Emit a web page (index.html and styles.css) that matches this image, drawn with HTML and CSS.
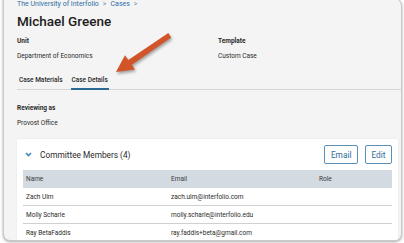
FILE: index.html
```html
<!DOCTYPE html>
<html lang="en">
<head>
  <link rel="stylesheet" href="styles.css">
</head>
<body>

<div class="window">
  <div class="crumbs">
    <a href="#">The University of Interfolio</a><span class="sep">&gt;</span><a href="#">Cases</a><span class="sep">&gt;</span>
  </div>
  <h1 class="title">Michael Greene</h1>

  <div class="meta">
    <div class="meta-col">
      <div class="label">Unit</div>
      <div class="value">Department of Economics</div>
    </div>
    <div class="meta-col">
      <div class="label">Template</div>
      <div class="value">Custom Case</div>
    </div>
  </div>

  <div class="tabs">
    <a class="tab" href="#">Case Materials</a>
    <a class="tab active" href="#">Case Details</a>
  </div>

  <div class="label reviewing">Reviewing as</div>
  <div class="value">Provost Office</div>

  <div class="card">
    <div class="card-head">
      <svg class="chevron" width="7" height="5" viewBox="0 0 7 5"><path d="M1 1 L3.5 3.5 L6 1" fill="none" stroke="#3a86bf" stroke-width="1.6"/></svg>
      <span class="card-title">Committee Members (4)</span>
      <a class="btn" href="#">Email</a>
      <a class="btn" href="#">Edit</a>
    </div>
    <div class="table">
      <div class="row head">
        <span>Name</span><span>Email</span><span>Role</span>
      </div>
      <div class="row">
        <span>Zach Ulm</span><span>zach.ulm@interfolio.com</span><span></span>
      </div>
      <div class="row">
        <span>Molly Scharle</span><span>molly.scharle@interfolio.edu</span><span></span>
      </div>
      <div class="row">
        <span>Ray BetaFaddis</span><span>ray.faddis+beta@gmail.com</span><span></span>
      </div>
    </div>
  </div>
</div>

<!-- annotation arrow over the screenshot -->
<svg class="arrow" width="404" height="243" viewBox="0 0 404 243">
  <polygon points="168.3,33 171.2,37.4 131.8,64.8 135,69.5 116,72 125,55.2 128.3,60" fill="#d2552a"/>
</svg>

</body>
</html>
```

FILE: styles.css
```css
body {
  margin: 0;
  background: #ffffff;
  font-family: Roboto, "Liberation Sans", sans-serif;
  color: #222;
  overflow: hidden;
  height: 243px;
}

.window {
  margin: -3px 2px 0 3px;
  height: 244px;
  box-sizing: border-box;
  background: #f4f4f4;
  border: 1px solid #c9c9c9;
  border-radius: 0 9px 7px 7px;
  box-shadow: 0 1px 3px rgba(0, 0, 0, 0.35);
  padding-left: 13px;
  overflow: hidden;
}

.crumbs {
  font-size: 7px;
  line-height: 10px;
  padding-top: 1px;
  color: #2f6fa6;
}

.crumbs a {
  color: #2f6fa6;
  text-decoration: none;
}

.crumbs .sep {
  margin: 0 4px;
  color: #6a8fb0;
}

.title {
  margin: 4px 0 0 0;
  font-size: 13.5px;
  line-height: 16px;
  font-weight: 500;
  color: #1c1c1c;
}

.meta {
  display: flex;
  margin-top: 8px;
}

.meta-col {
  flex: 0 0 201px;
}

.label {
  font-size: 6.5px;
  line-height: 9px;
  font-weight: 700;
  color: #2a2a2a;
}

.value {
  margin-top: 6px;
  font-size: 6.5px;
  line-height: 9px;
  color: #2a2a2a;
}

.tabs {
  display: flex;
  gap: 7px;
  margin-top: 15px;
  padding-left: 1px;
  border-bottom: 1px solid #d6d6d6;
}

.tab {
  font-size: 6.5px;
  line-height: 9px;
  font-weight: 500;
  color: #2a2a2a;
  text-decoration: none;
  padding: 0 1px 3px;
  border-bottom: 2px solid transparent;
  margin-bottom: -1px;
}

.tab.active {
  border-bottom-color: #2b6a95;
}

.reviewing {
  margin-top: 14px;
}

.card {
  margin: 11px 3px 0 0;
  background: #fff;
  padding: 6px 6px 0;
  box-shadow: 0 0 1px rgba(0, 0, 0, 0.12);
}

.card-head {
  display: flex;
  align-items: center;
  gap: 7px;
  height: 19px;
  margin-bottom: 6px;
}

.chevron {
  margin-left: 2px;
  margin-right: 1px;
}

.card-title {
  flex: 1;
  font-size: 8.3px;
  color: #2a2a2a;
}

.btn {
  height: 19px;
  box-sizing: border-box;
  padding: 0 5.5px;
  display: flex;
  align-items: center;
  border: 1px solid #5b8fb5;
  border-radius: 2px;
  font-size: 8.3px;
  color: #2e6d9c;
  text-decoration: none;
}

.table {
  font-size: 6.5px;
  color: #2a2a2a;
}

.row {
  display: grid;
  grid-template-columns: 145px 148px 1fr;
  align-items: center;
  height: 17px;
  border-bottom: 1px solid #d0d0d0;
}

.row span {
  padding-left: 3px;
}

.row.head {
  height: 18px;
  background: #d3dae1;
  border-bottom: none;
  color: #3a3a3a;
}

.arrow {
  position: absolute;
  left: 0;
  top: 0;
  filter: drop-shadow(1px 2px 1.5px rgba(0, 0, 0, 0.35));
}
```
